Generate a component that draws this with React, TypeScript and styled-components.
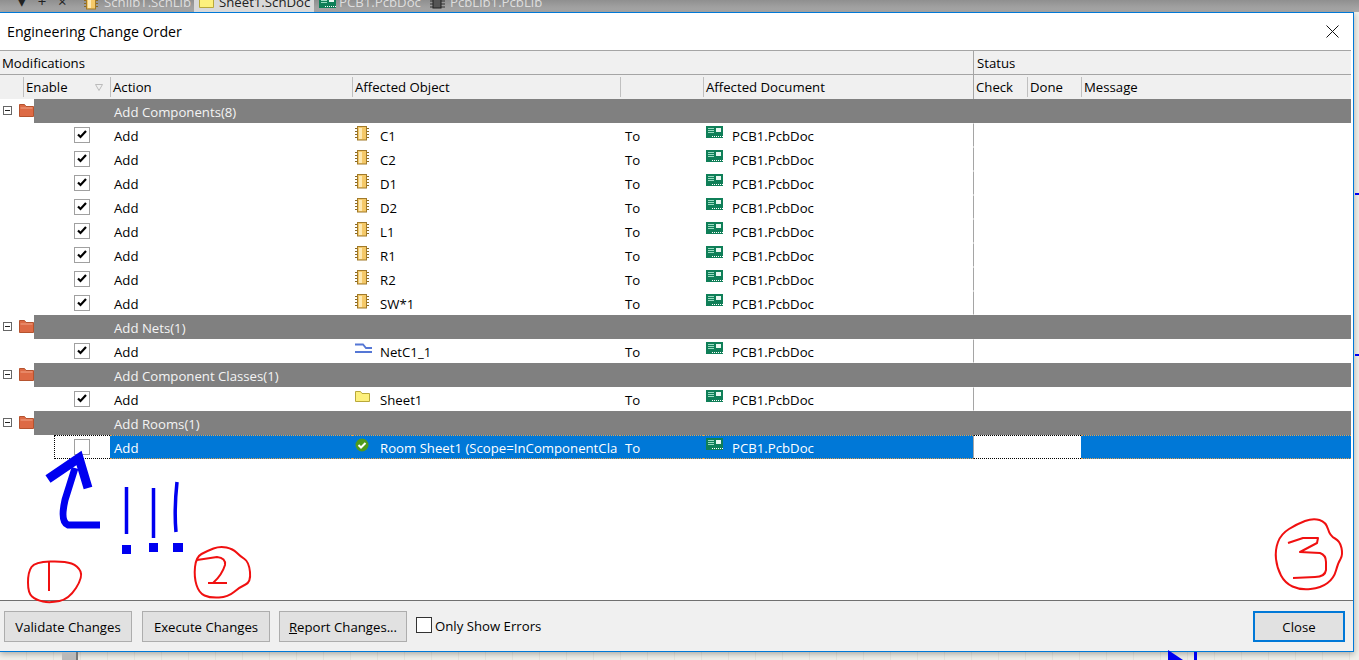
import type { ReactNode } from 'react';
import styled, { createGlobalStyle } from 'styled-components';

const GlobalStyle = createGlobalStyle`
  html, body {
    margin: 0;
    padding: 0;
    height: 660px;
    overflow: hidden;
    font-family: "Open Sans", "Noto Sans", "Liberation Sans", sans-serif;
    font-size: 13.2px;
    color: #000;
  }
`;

const components = ['C1', 'C2', 'D1', 'D2', 'L1', 'R1', 'R2', 'SW*1'];
const tabs = [
  { label: 'SchlibT.SchLib', width: 118, inset: 9, gap: 5, active: false, icon: 'chip' },
  { label: 'Sheet1.SchDoc', width: 120, inset: 5, gap: 5, active: true, icon: 'sheet' },
  { label: 'PCB1.PcbDoc', width: 112, inset: 4, gap: 3, active: false, icon: 'pcb' },
  { label: 'PcbLib1.PcbLib', width: 130, inset: 2, gap: 5, active: false, icon: 'lib' },
];

// rounds a hand drawn outline through the midpoints of its corners
const smooth = (pts: number[][]) => {
  const mid = (a: number[], b: number[]) => `${(a[0] + b[0]) / 2} ${(a[1] + b[1]) / 2}`;
  let d = `M${mid(pts[pts.length - 1], pts[0])}`;
  pts.forEach((p, i) => {
    d += `Q${p[0]} ${p[1]} ${mid(p, pts[(i + 1) % pts.length])}`;
  });
  return d;
};

const ringOne = [[35, 562], [28, 572], [28, 593], [36, 600], [50, 603], [69, 599], [83, 577], [78, 566], [65, 561]];
const ringTwo = [[196, 557], [194, 577], [199, 593], [210, 598], [228, 597], [240, 587], [251, 582], [249, 562], [240, 556], [233, 549], [220, 546], [207, 551]];
const ringThree = [[1330, 536], [1326, 522], [1313, 518], [1297, 524], [1281, 534], [1275, 550], [1277, 568], [1285, 583], [1300, 590], [1321, 588], [1334, 578], [1338, 563], [1343, 555], [1340, 541]];

const ChipIcon = () => (
  <svg width="15" height="15" viewBox="0 0 15 15">
    <path d="M0 2.500h3M0 5.500h3M0 8.500h3M0 11.500h3M11 2.500h3M11 5.500h3M11 8.500h3M11 11.500h3" stroke="#8a6a24" />
    <rect x="2.500" y="0.500" width="9" height="13.500" fill="#f5c968" stroke="#a17a2a" />
    <rect x="4" y="2" width="3" height="11" fill="#fde9b4" />
  </svg>
);

const PcbIcon = () => (
  <svg width="17" height="13" viewBox="0 0 17 13">
    <rect x="0" y="0" width="17" height="12" fill="#0f7f58" />
    <rect x="10" y="2" width="5" height="4" fill="#e8f7f0" />
    <path d="M2 2.500h6M2 4.500h6M2 6.500h6" stroke="#9adcc2" />
    <path d="M6 10.500h1M8 10.500h1M10 10.500h1M12 10.500h1M14 10.500h1M16 10.500h1" stroke="#fff" />
  </svg>
);

const LibIcon = () => (
  <svg width="15" height="13" viewBox="0 0 15 13">
    <path d="M0 5h15M0 8h15M0 11h15" stroke="#333" />
    <rect x="3" y="2" width="8" height="10" fill="#555" stroke="#222" />
  </svg>
);

const NetIcon = () => (
  <svg width="17" height="13" viewBox="0 0 17 13">
    <path d="M0 2.500h8l3 3.500h6M0 10h17" fill="none" stroke="#5577d5" strokeWidth="1.800" />
  </svg>
);

const YellowFolderIcon = () => (
  <svg width="15" height="13" viewBox="0 0 15 13">
    <path d="M0.500 11.500V1.500h5l1.500 2h7.500v8z" fill="#fdf07c" stroke="#b9a83a" />
  </svg>
);

const RedFolderIcon = () => (
  <svg width="15" height="13" viewBox="0 0 15 13">
    <path d="M0.500 12.500V0.500h5l1.500 2h7.500v10z" fill="#dd6a45" stroke="#b5532f" />
    <path d="M1.500 4h12" stroke="#f2a487" />
  </svg>
);

const OkIcon = () => (
  <svg width="14" height="14" viewBox="0 0 14 14">
    <circle cx="7" cy="7" r="6.500" fill="#4f9a1c" />
    <path d="M3.500 7l2.500 2.500 4.500-4.500" fill="none" stroke="#fff" strokeWidth="2" />
  </svg>
);

const CheckMark = () => (
  <MarkIcon width="10" height="9" viewBox="0 0 10 9">
    <path d="M1 4.500l2.500 2.500L9 1" fill="none" stroke="#000" strokeWidth="2.200" />
  </MarkIcon>
);

const TabIcon = ({ kind }: { kind: string }) => {
  if (kind === 'pcb') return <PcbIcon />;
  if (kind === 'sheet') return <YellowFolderIcon />;
  if (kind === 'chip') return <ChipIcon />;
  return <LibIcon />;
};

const Row = ({ icon, name, checked = true, selected = false }: { icon: ReactNode; name: string; checked?: boolean; selected?: boolean }) => (
  <RowGrid $selected={selected}>
    <span />
    <EnableCell $focus={selected}>
      <Box>{checked && <CheckMark />}</Box>
    </EnableCell>
    <Cell $selected={selected}>Add</Cell>
    <Cell $selected={selected} $inset={3}>
      <IconSlot $width={25}>{icon}</IconSlot>
      <Clip>{name}</Clip>
    </Cell>
    <Cell $selected={selected} $inset={5}>To</Cell>
    <Cell $selected={selected} $inset={3}>
      <IconSlot $width={26}><PcbIcon /></IconSlot>
      PCB1.PcbDoc
    </Cell>
    <StatusCell $selected={selected} />
    <Cell $selected={selected} />
  </RowGrid>
);

const Group = ({ label }: { label: string }) => (
  <GroupRow>
    <GroupLead>
      <Expander />
      <RedFolderIcon />
    </GroupLead>
    <GroupBar>{label}</GroupBar>
  </GroupRow>
);

export default function App() {
  return (
    <Page>
      <GlobalStyle />
      <TabStrip>
        <TabTools>▾&nbsp;&nbsp;&nbsp;+&nbsp;&nbsp;&nbsp;×</TabTools>
        {tabs.map((tab) => (
          <Tab key={tab.label} $width={tab.width} $inset={tab.inset} $gap={tab.gap} $active={tab.active}>
            <TabIcon kind={tab.icon} />
            {tab.label}
          </Tab>
        ))}
      </TabStrip>

      <Dialog>
        <TitleBar>
          Engineering Change Order
          <svg width="13" height="13" viewBox="0 0 13 13">
            <path d="M0.500 0.500l12 12M12.500 0.500l-12 12" stroke="#111" />
          </svg>
        </TitleBar>

        <Table>
          <BandRow>
            <span>Modifications</span>
            <StatusBand>Status</StatusBand>
          </BandRow>
          <HeadRow>
            <HeadCell />
            <HeadCell>
              Enable
              <SortIcon width="8" height="7" viewBox="0 0 8 7">
                <path d="M0.500 0.500h7L4 6.500z" fill="none" stroke="#bbb" />
              </SortIcon>
            </HeadCell>
            <HeadCell>Action</HeadCell>
            <HeadCell>Affected Object</HeadCell>
            <HeadCell />
            <HeadCell>Affected Document</HeadCell>
            <HeadCell $full>Check</HeadCell>
            <HeadCell>Done</HeadCell>
            <HeadCell>Message</HeadCell>
          </HeadRow>

          <Group label="Add Components(8)" />
          {components.map((name) => (
            <Row key={name} icon={<ChipIcon />} name={name} />
          ))}
          <Group label="Add Nets(1)" />
          <Row icon={<NetIcon />} name="NetC1_1" />
          <Group label="Add Component Classes(1)" />
          <Row icon={<YellowFolderIcon />} name="Sheet1" />
          <Group label="Add Rooms(1)" />
          <Row icon={<OkIcon />} name="Room Sheet1 (Scope=InComponentCla" checked={false} selected />
        </Table>

        <Footer>
          <Button>Validate Changes</Button>
          <Button>Execute Changes</Button>
          <ReportButton><u>R</u>eport Changes...</ReportButton>
          <ErrorsToggle>
            <FooterBox />
            Only Show Errors
          </ErrorsToggle>
          <CloseButton>Close</CloseButton>
        </Footer>
      </Dialog>

      {/* hand drawn notes and the canvas showing round the dialog */}
      <Sketch width="1359" height="660" viewBox="0 0 1359 660">
        <g fill="none" stroke="#0000f0" strokeLinejoin="miter">
          <path d="M48 479L79 458L88 488" strokeWidth="9" />
          <path d="M75 468L65 500Q60 522 68 525L100 525" strokeWidth="7" />
          <path d="M126.500 487V534M153.500 488V538M177 482Q174 510 176 532" strokeWidth="3.500" />
        </g>
        <g fill="#0000f0">
          <rect x="122" y="545" width="9" height="9" />
          <rect x="149" y="543" width="9" height="9" />
          <rect x="173" y="543" width="10" height="9" />
          <path d="M1168 650L1183 660H1168z" />
          <rect x="1194" y="652" width="3" height="8" />
          <rect x="1355" y="193" width="4" height="2" />
          <rect x="1355" y="354" width="4" height="2" />
        </g>
        <g fill="none" stroke="#f01010" strokeWidth="2" strokeLinejoin="round">
          <path d={smooth(ringOne)} />
          <path d="M49 562V591" />
          <path d={smooth(ringTwo)} />
          <path d="M197 560L217 557Q226 558 225 565Q222 575 213 583M208 583H227" />
          <path d={smooth(ringThree)} />
          <path d="M1288 543L1303 538H1318L1317 543L1300 552L1320 553Q1326 555 1326 562V570Q1325 577 1315 577L1293 578" />
        </g>
        <rect x="62" y="652" width="16" height="8" fill="#b9b9b9" />
        <rect x="76" y="652" width="2" height="8" fill="#777" />
      </Sketch>
    </Page>
  );
}

const Page = styled.div`
  position: relative;
  width: 1359px;
  height: 660px;
  overflow: hidden;
  background-color: #f1f0ea;
  background-image: repeating-linear-gradient(90deg, transparent 0 26px, #e6e5de 26px 27px);
`;

const TabStrip = styled.div`
  display: flex;
  height: 12px;
  overflow: hidden;
  background: linear-gradient(#8f8f8f, #acacac);
`;

const TabTools = styled.div`
  width: 75px;
  margin-top: -9px;
  padding-left: 18px;
  box-sizing: border-box;
  font-size: 15px;
  color: #222;
  white-space: nowrap;
`;

const Tab = styled.div<{ $width: number; $inset: number; $gap: number; $active: boolean }>`
  display: flex;
  flex: none;
  align-items: center;
  gap: ${({ $gap }) => $gap}px;
  width: ${({ $width }) => $width}px;
  height: 22px;
  margin-top: -9px;
  margin-right: 1px;
  padding-left: ${({ $inset }) => $inset}px;
  box-sizing: border-box;
  white-space: nowrap;
  color: ${({ $active }) => ($active ? '#222' : '#dedede')};
  background: ${({ $active }) => ($active ? '#d9d9d9' : 'transparent')};
`;

const Dialog = styled.div`
  display: flex;
  flex-direction: column;
  width: 1354px;
  height: 640px;
  box-sizing: border-box;
  background: #fff;
  border: 1px solid #0078d7;
  border-left: none;
  box-shadow: 0 2px 6px rgba(0, 0, 0, 0.3);
`;

const TitleBar = styled.div`
  display: flex;
  flex: none;
  align-items: center;
  justify-content: space-between;
  height: 37px;
  padding: 0 14px 0 7px;
  font-size: 14.200px;
`;

const Table = styled.div`
  flex: 1;
  width: 1351px;
  border-top: 1px solid #a5a5a5;
`;

const columns = '23px 87px 242px 268px 83px 270px 54px 54px 1fr';

const BandRow = styled.div`
  display: flex;
  justify-content: space-between;
  align-items: center;
  height: 24px;
  padding-left: 2px;
  box-sizing: border-box;
  background: #f0f0f0;
  border-bottom: 1px solid #a5a5a5;
`;

const StatusBand = styled.div`
  display: flex;
  align-items: center;
  width: 378px;
  height: 100%;
  padding-left: 3px;
  box-sizing: border-box;
  border-left: 1px solid #a5a5a5;
`;

const HeadRow = styled.div`
  display: grid;
  grid-template-columns: ${columns};
  height: 24px;
  background: #f0f0f0;
`;

const HeadCell = styled.div<{ $full?: boolean }>`
  position: relative;
  display: flex;
  align-items: center;
  padding-left: 2px;
  margin: ${({ $full }) => ($full ? '0' : '2px 0')};
  border-left: 1px solid ${({ $full }) => ($full ? '#a5a5a5' : '#c0c0c0')};
  &:first-child {
    border-left: none;
  }
`;

const SortIcon = styled.svg`
  position: absolute;
  right: 7px;
  top: 7px;
`;

const GroupRow = styled.div`
  display: flex;
  height: 24px;
`;

const GroupLead = styled.div`
  display: flex;
  flex: none;
  align-items: center;
  gap: 7px;
  width: 34px;
  padding: 0 0 2px 3px;
  box-sizing: border-box;
`;

const Expander = styled.span`
  position: relative;
  flex: none;
  width: 9px;
  height: 9px;
  box-sizing: border-box;
  border: 1px solid #666;
  &::after {
    content: '';
    position: absolute;
    left: 1px;
    top: 3px;
    width: 5px;
    height: 1px;
    background: #222;
  }
`;

const GroupBar = styled.div`
  display: flex;
  flex: 1;
  align-items: center;
  padding: 1px 0 0 80px;
  color: #f4f4f4;
  background: #808080;
`;

const RowGrid = styled.div<{ $selected: boolean }>`
  display: grid;
  grid-template-columns: 54px 56px 242px 268px 83px 270px 108px 1fr;
  height: 24px;
  color: ${({ $selected }) => ($selected ? '#fff' : '#000')};
`;

const EnableCell = styled.div<{ $focus: boolean }>`
  display: flex;
  align-items: center;
  padding-left: 19px;
  box-sizing: border-box;
  border: 1px dotted ${({ $focus }) => ($focus ? '#000' : 'transparent')};
  border-right: none;
`;

const Box = styled.span`
  display: flex;
  align-items: center;
  justify-content: center;
  width: 16px;
  height: 16px;
  box-sizing: border-box;
  background: #fff;
  border: 1px solid #a0a0a0;
`;

const MarkIcon = styled.svg`
  margin-top: -2px;
`;

const Cell = styled.div<{ $selected: boolean; $inset?: number }>`
  display: flex;
  align-items: center;
  min-width: 0;
  padding: 1px 0 0 ${({ $inset }) => $inset ?? 4}px;
  box-sizing: border-box;
  white-space: nowrap;
  background: ${({ $selected }) => ($selected ? '#0078d7' : 'transparent')};
  border-top: 1px dotted ${({ $selected }) => ($selected ? '#e0a050' : 'transparent')};
  border-bottom: 1px dotted ${({ $selected }) => ($selected ? '#e0a050' : 'transparent')};
`;

const IconSlot = styled.span<{ $width: number }>`
  flex: none;
  display: flex;
  align-self: flex-start;
  width: ${({ $width }) => $width}px;
  margin-top: 1px;
`;

const Clip = styled.span`
  overflow: hidden;
`;

const StatusCell = styled.div<{ $selected: boolean }>`
  box-sizing: border-box;
  background: #fff;
  border-left: 1px solid #a5a5a5;
  border-top: 1px dotted ${({ $selected }) => ($selected ? '#000' : 'transparent')};
  border-bottom: 1px dotted ${({ $selected }) => ($selected ? '#000' : 'transparent')};
`;

const Footer = styled.div`
  display: flex;
  flex: none;
  align-items: center;
  gap: 10px;
  height: 51px;
  padding: 0 7px 0 4px;
  box-sizing: border-box;
  background: #f0f0f0;
  border-top: 1px solid #707070;
`;

const Button = styled.button`
  width: 128px;
  height: 31px;
  padding: 2px 0 0;
  font: inherit;
  color: #000;
  background: #e1e1e1;
  border: 1px solid #adadad;
`;

const ReportButton = styled(Button)`
  margin-left: -1px;
`;

const ErrorsToggle = styled.div`
  display: flex;
  align-items: center;
  gap: 3px;
  margin-left: -1px;
  margin-bottom: 1px;
`;

const FooterBox = styled.span`
  width: 16px;
  height: 16px;
  margin-bottom: 2px;
  box-sizing: border-box;
  background: #fff;
  border: 1px solid #333;
`;

const CloseButton = styled(Button)`
  width: 92px;
  margin-left: auto;
  margin-right: 1px;
  border: 2px solid #0078d7;
`;

const Sketch = styled.svg`
  position: absolute;
  left: 0;
  top: 0;
  pointer-events: none;
`;
